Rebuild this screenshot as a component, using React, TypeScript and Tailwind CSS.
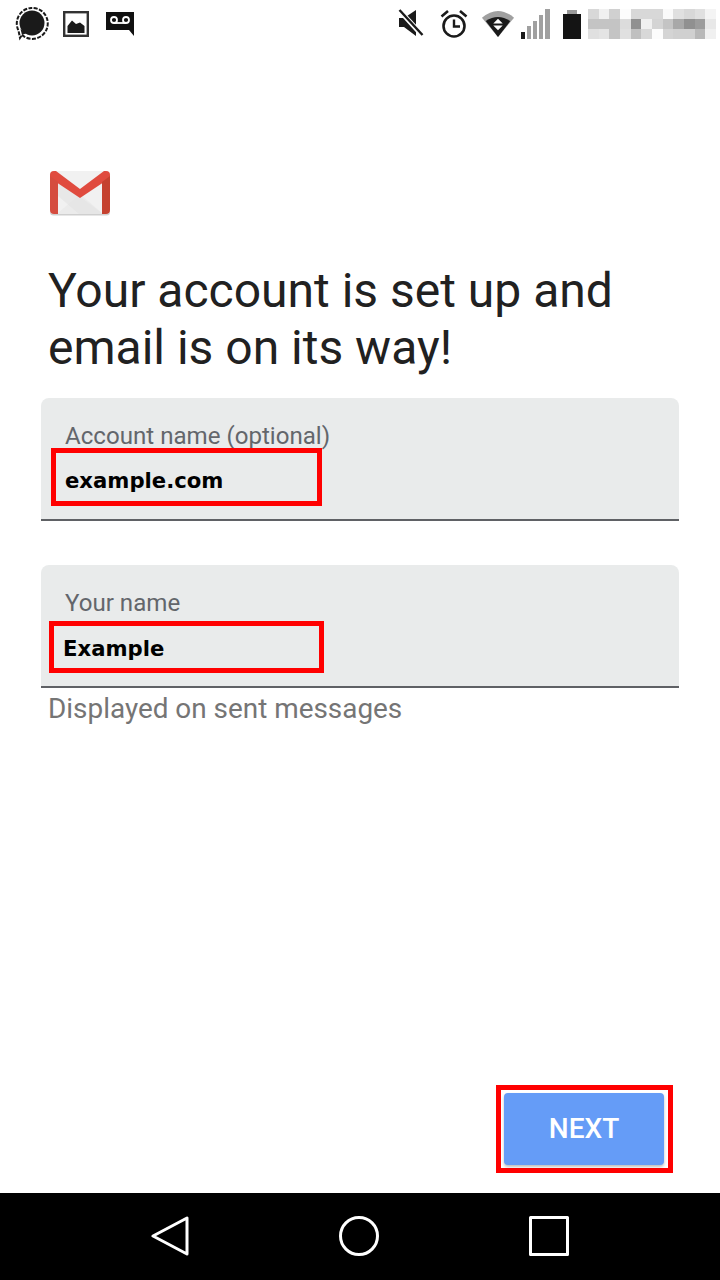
const MOSAIC = [
  ["#d8d8d8", "#f0f0f0", "#d0d0d0", "#fcfcfc", "#d8d8d8", "#d8d8d8", "#d8d8d8", "#fafafa", "#e0e0e0", "#d8d8d8", "#e0e0e0", "#f4f4f4"],
  ["#c4c4c4", "#c4c4c4", "#c4c4c4", "#dcdcdc", "#909090", "#f0f0f0", "#d4d4d4", "#c4c4c4", "#a8a8a8", "#909090", "#9c9c9c", "#e8e8e8"],
  ["#e0e0e0", "#e4e4e4", "#c4c4c4", "#e0e0e0", "#c0c0c0", "#d8d8d8", "#fcfcfc", "#d4d4d4", "#d0d0d0", "#d0d0d0", "#b8b8b8", "#f0f0f0"],
];

function SignalIcon() {
  return (
    <svg width="36" height="36" viewBox="0 0 36 36" className="text-[#1a1a1a]">
      <circle cx="18" cy="18" r="12.5" fill="currentColor" />
      <path d="M8 30 A15.5 15.5 0 1 0 4.5 25.5 L6 33 Z" fill="none" stroke="currentColor" strokeWidth="2" strokeDasharray="4 1.4" />
      <path d="M6.5 24 L8 30 L13 28 Z" fill="currentColor" />
    </svg>
  );
}

function ImageIcon() {
  return (
    <svg width="26" height="26" viewBox="0 0 26 26">
      <rect x="1.2" y="1.2" width="23.6" height="23.6" fill="#fff" stroke="#333" strokeWidth="2.4" />
      <path d="M4.5 22 V15 L9 9.5 L13 13 L17 11.5 L21.5 15 V22 Z" fill="#1a1a1a" />
    </svg>
  );
}

function VoicemailIcon() {
  return (
    <svg width="30" height="26" viewBox="0 0 30 26">
      <path d="M1 1 H29 V25 L24 19 H1 Z" fill="#111" />
      <circle cx="9" cy="9" r="3" fill="none" stroke="#fff" strokeWidth="1.8" />
      <circle cx="21" cy="9" r="3" fill="none" stroke="#fff" strokeWidth="1.8" />
      <path d="M9 12 H21" stroke="#fff" strokeWidth="1.8" />
    </svg>
  );
}

function MuteIcon() {
  return (
    <svg width="26" height="28" viewBox="0 0 26 28">
      <path d="M1 9 H6 L18 1 V27 L6 18 H1 Z" fill="#1a1a1a" />
      <path d="M1 1 L24 26" stroke="#fff" strokeWidth="5" />
      <path d="M1.5 1 L24.5 26" stroke="#1a1a1a" strokeWidth="2.4" />
    </svg>
  );
}

function AlarmIcon() {
  return (
    <svg width="28" height="30" viewBox="0 0 28 30" fill="none" stroke="#1a1a1a">
      <circle cx="14" cy="17" r="10.5" strokeWidth="2.6" />
      <path d="M14 10.5 V17.5 H20" strokeWidth="2.4" />
      <path d="M1.5 7.5 L8 2 M26.5 7.5 L20 2" strokeWidth="2.6" />
    </svg>
  );
}

function WifiIcon() {
  return (
    <svg width="34" height="29" viewBox="0 0 36 30" preserveAspectRatio="none">
      <path d="M1 9 Q18 -5 35 9 L18 29 Z" fill="#a0a0a0" />
      <path d="M5 12.5 Q18 4 31 12.5 L18 29 Z" fill="#1a1a1a" />
      <path d="M18 10 L23 15 H13 Z M13 17 H23 L18 22 Z" fill="#fff" />
    </svg>
  );
}

function CellIcon() {
  return (
    <svg width="30" height="30" viewBox="0 0 30 30">
      <rect x="1" y="23" width="4" height="7" fill="#1a1a1a" />
      <rect x="7" y="17" width="4" height="13" fill="#a0a0a0" />
      <rect x="13" y="12" width="4" height="18" fill="#a0a0a0" />
      <rect x="19" y="6" width="4" height="24" fill="#a0a0a0" />
      <rect x="25" y="0" width="5" height="30" fill="#a0a0a0" />
    </svg>
  );
}

function BatteryIcon() {
  return (
    <svg width="18" height="29" viewBox="0 0 18 29">
      <rect x="4" y="0" width="10" height="4" fill="#999" />
      <rect x="0" y="4" width="18" height="25" fill="#141414" />
    </svg>
  );
}

function GmailIcon() {
  return (
    <svg width="62" height="46" viewBox="0 0 62 46">
      <rect x="1" y="1.5" width="60" height="44" rx="3.5" fill="#cfcfcf" />
      <rect x="1" y="1" width="60" height="43" rx="3.5" fill="#f1f1f1" />
      <path d="M8 44 L31 24 L54 44 Z" fill="#ebebeb" />
      <path d="M9 10 L54 44 H30 L9 26 Z" fill="#e2e2e2" opacity="0.6" />
      <path d="M1 5 Q1 1 5 1 H7 L31 19 L55 1 H57 Q61 1 61 5 V8 L31 28 L1 8 Z" fill="#e04b3f" />
      <path d="M1 6 L9 12 V44 H5 Q1 44 1 40 Z" fill="#d54c3f" />
      <path d="M61 6 L53 12 V44 H57 Q61 44 61 40 Z" fill="#c5412f" />
    </svg>
  );
}

function Field({ label, value, box, textOffset }: { label: string; value: string; box: string; textOffset: string }) {
  return (
    <div className="h-[123px] rounded-t-[8px] bg-[#e9ebeb] border-b-2 border-[#5f6165] pl-6 pt-[24px]">
      <div className="text-[24.1px] leading-[28px] text-[#63666b] [font-family:Roboto,sans-serif]">{label}</div>
      <div className="relative">
        {/* red annotation over the input value */}
        <div className={box} />
        <div className={textOffset}>{value}</div>
      </div>
    </div>
  );
}

export default function App() {
  return (
    <div className="flex h-[1280px] w-[720px] flex-col overflow-hidden bg-white [font-family:Roboto,sans-serif]">
      {/* status bar */}
      <div className="flex h-[48px] items-start">
        <div className="mt-[5px] ml-[14px]"><SignalIcon /></div>
        <div className="mt-[11px] ml-[13px]"><ImageIcon /></div>
        <div className="mt-[11px] ml-[16px]"><VoicemailIcon /></div>
        <div className="ml-auto mt-[9px]"><MuteIcon /></div>
        <div className="mt-[9px] ml-[16px]"><AlarmIcon /></div>
        <div className="mt-[9px] ml-[13px]"><WifiIcon /></div>
        <div className="mt-[9px] ml-[5px]"><CellIcon /></div>
        <div className="mt-[10px] ml-[13px]"><BatteryIcon /></div>
        <div className="mt-[9px] ml-[7px] mr-[4px] grid grid-cols-12">
          {MOSAIC.flat().map((c, i) => (
            <div key={i} className="h-[10px] w-[10.67px]" style={{ backgroundColor: c }} />
          ))}
        </div>
      </div>

      <div className="flex flex-1 flex-col px-[41px]">
        <div className="mt-[122px] ml-[8px]"><GmailIcon /></div>
        <h1 className="mt-[46px] ml-[7px] text-[48px] leading-[57px] font-normal text-[#212121]">
          Your account is set up and
          <br />
          email is on its way!
        </h1>

        <div className="mt-[22px] flex flex-col gap-[44px]">
          <Field
            label="Account name (optional)"
            value="example.com"
            box="absolute left-[-14px] top-[-2px] h-[58px] w-[271px] border-[5px] border-[#ff0000]"
            textOffset="pt-[17px] text-[21.2px] leading-[28px] font-bold text-black [font-family:'DejaVu_Sans',sans-serif]"
          />
          <div>
            <Field
              label="Your name"
              value="Example"
              box="absolute left-[-16px] top-[4px] h-[52px] w-[275px] border-[5px] border-[#ff0000]"
              textOffset="pt-[18px] ml-[-2px] text-[21.2px] leading-[28px] font-bold text-black [font-family:'DejaVu_Sans',sans-serif]"
            />
            <p className="mt-[4px] ml-[7px] text-[27.9px] leading-[34px] text-[#757575]">Displayed on sent messages</p>
          </div>
        </div>

        <div className="mt-auto mb-[20px] flex justify-end">
          <div className="mr-[6px] border-[5px] border-[#ff0000] pt-[3px] pb-[3px] pl-[3px] pr-[4px]">
            <button className="flex h-[72px] w-[160px] items-center justify-center rounded-[4px] bg-[#659cf7] text-[28px] font-medium text-white shadow-[0_2px_3px_rgba(0,0,0,0.25)]">
              NEXT
            </button>
          </div>
        </div>
      </div>

      {/* navigation bar */}
      <div className="flex h-[87px] items-start bg-black pt-[23px]">
        <svg width="40" height="40" viewBox="0 0 40 40" className="ml-[150px]" fill="none" stroke="#fff" strokeWidth="3" strokeLinejoin="round">
          <path d="M37 2 V38 L3 20 Z" />
        </svg>
        <svg width="40" height="40" viewBox="0 0 40 40" className="ml-[149px]" fill="none" stroke="#fff" strokeWidth="3">
          <circle cx="20" cy="20" r="18.5" />
        </svg>
        <svg width="40" height="40" viewBox="0 0 40 40" className="ml-[150px]" fill="none" stroke="#fff" strokeWidth="3" strokeLinejoin="round">
          <rect x="1.5" y="1.5" width="37" height="37" />
        </svg>
      </div>
    </div>
  );
}
